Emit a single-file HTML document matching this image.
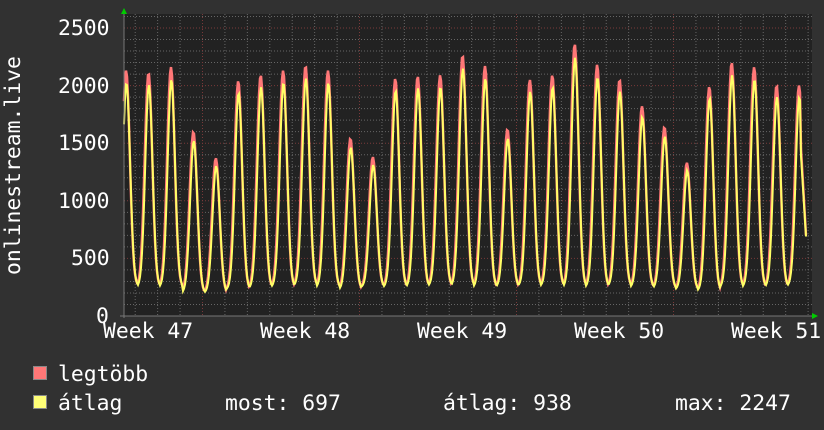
<!DOCTYPE html>
<html><head><meta charset="utf-8"><style>
body{margin:0;background:#313131;width:824px;height:430px;overflow:hidden;font-family:"DejaVu Sans Mono","Liberation Mono",monospace;color:#fff}
.t{position:absolute;font-size:21.4px;line-height:21px;white-space:pre}
</style></head><body>
<svg id="g" width="824" height="430" style="position:absolute;left:0;top:0">
<rect x="124" y="14" width="688" height="302" fill="#222"/>
</svg>
<div class="t" style="left:58px;top:18px">2500</div>
<div class="t" style="left:58px;top:76px">2000</div>
<div class="t" style="left:58px;top:133px">1500</div>
<div class="t" style="left:58px;top:191px">1000</div>
<div class="t" style="left:71px;top:248px">500</div>
<div class="t" style="left:96px;top:306px">0</div>
<div class="t" style="left:103px;top:321px">Week 47</div>
<div class="t" style="left:260px;top:321px">Week 48</div>
<div class="t" style="left:417px;top:321px">Week 49</div>
<div class="t" style="left:574px;top:321px">Week 50</div>
<div class="t" style="left:731px;top:321px">Week 51</div>
<div class="t" style="left:3px;top:275px;transform:rotate(-90deg);transform-origin:0 0;">onlinestream.live</div>
<div style="position:absolute;left:33px;top:366px;width:12px;height:12px;background:#f77;border:1px solid #888"></div>
<div style="position:absolute;left:33px;top:395px;width:12px;height:12px;background:#ff7;border:1px solid #888"></div>
<div class="t" style="left:58px;top:364px">legtöbb</div>
<div class="t" style="left:58px;top:393px">átlag</div>
<div class="t" style="left:225px;top:393px">most: 697</div>
<div class="t" style="left:443px;top:393px">átlag: 938</div>
<div class="t" style="left:675px;top:393px">max: 2247</div>
<script>
var s=document.getElementById('g'),h='';
function Y(v){return 316-v*0.1152}
for(var v=100;v<=2600;v+=100){var y=Y(v);if(y<14)break;h+='<line x1="124" x2="812" y1="'+y+'" y2="'+y+'" stroke="'+(v%500?'#666':'#7a3a3a')+'" stroke-dasharray="1,2"/>';}
for(var i=0;i<31;i++){var x=124+11.2+i*22.43;h+='<line x1="'+x+'" x2="'+x+'" y1="14" y2="316" stroke="'+((i%7==3)?'#7a3a3a':'#666')+'" stroke-dasharray="1,2"/>';}
var pk=[2130,2110,2160,1600,1370,2040,2090,2130,2170,2130,1540,1380,2060,2080,2090,2260,2170,1620,2050,2090,2360,2180,2050,1820,1640,1330,1990,2200,2160,2000,2000];
var mn=[260,250,250,200,200,230,240,250,260,250,230,250,250,250,260,260,250,250,260,260,250,250,260,250,240,230,220,250,250,250,260];
var r='',yl='';
for(var x=124;x<=806;x+=1){var d=(x-126+11.2)/22.43,k=Math.floor(d),f=d-k;k=Math.max(0,Math.min(30,k));var ph=f-0.5;
var b=Math.pow(Math.cos(ph*Math.PI),4)*(1+0.15*Math.sin(ph*9));var v=mn[k]+(pk[k]-mn[k])*Math.exp(-Math.pow(ph/0.24,2))*0.9+(pk[k]-mn[k])*0.1*b;
var v2=mn[k]+(pk[k]*0.95-mn[k])*Math.exp(-Math.pow((ph-0.02)/0.23,2));
if(x>800){v=700+(806-x)*150;v2=690+(806-x)*140;}
r+=(x==124?'M':'L')+x+','+Y(v).toFixed(1);yl+=(x==124?'M':'L')+x+','+Y(v2).toFixed(1);}
h+='<path d="'+r+'" fill="none" stroke="#f77" stroke-width="2.5"/>';
h+='<path d="'+yl+'" fill="none" stroke="#ff6" stroke-width="2"/>';
h+='<line x1="124" x2="124" y1="12" y2="318" stroke="#777"/><line x1="120" x2="815" y1="316" y2="316" stroke="#777"/>';
h+='<polygon points="121,14 127,14 124,8" fill="#0c0"/><polygon points="812,313 812,319 818,316" fill="#0c0"/>';
s.innerHTML+=h;
</script>
</body></html>
